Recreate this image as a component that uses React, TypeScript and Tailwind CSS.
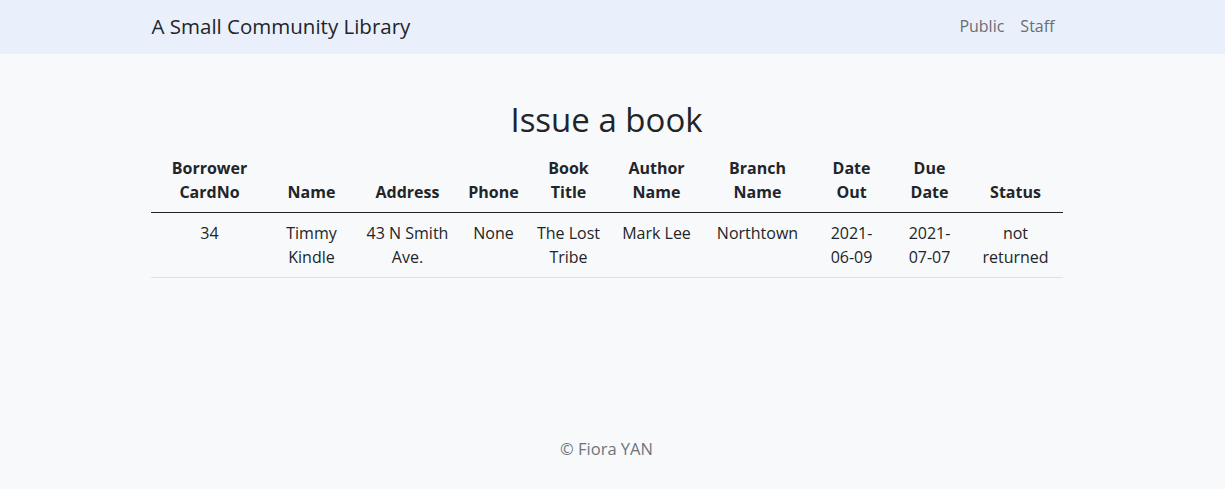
import React from 'react';

const columns = [
  { w: 'w-[118px]', head: ['Borrower', 'CardNo'], cell: ['34'] },
  { w: 'w-[86px]', head: ['Name'], cell: ['Timmy', 'Kindle'] },
  { w: 'w-[106px]', head: ['Address'], cell: ['43 N Smith', 'Ave.'] },
  { w: 'w-[66px]', head: ['Phone'], cell: ['None'] },
  { w: 'w-[84px]', head: ['Book', 'Title'], cell: ['The Lost', 'Tribe'] },
  { w: 'w-[92px]', head: ['Author', 'Name'], cell: ['Mark Lee'] },
  { w: 'w-[110px]', head: ['Branch', 'Name'], cell: ['Northtown'] },
  { w: 'w-[78px]', head: ['Date', 'Out'], cell: ['2021-', '06-09'] },
  { w: 'w-[78px]', head: ['Due', 'Date'], cell: ['2021-', '07-07'] },
  { w: 'w-[94px]', head: ['Status'], cell: ['not', 'returned'] },
];

const Lines = ({ lines }: { lines: string[] }) => (
  <>
    {lines.map((l, i) => (
      <span key={i} className="block whitespace-nowrap">{l}</span>
    ))}
  </>
);

export default function App() {
  return (
    <div className="min-h-[489px] bg-[#f8f9fa] text-[#212529] font-['Open_Sans',sans-serif] flex flex-col">
      {/* Navbar */}
      <nav className="bg-[#e9f0fb] pr-3">
        <div className="w-[912px] mx-auto h-[54px] flex items-center justify-between pb-[2px]">
          <span className="text-[20.5px] pl-[1px]">A Small Community Library</span>
          <div className="flex text-[16px] text-[#6a6d71]">
            <a className="px-2">Public</a>
            <a className="px-2">Staff</a>
          </div>
        </div>
      </nav>

      <main className="pr-3 flex-1">
        <div className="w-[912px] mx-auto">
          <h1 className="text-[33px] leading-[1.2] text-center mt-[46px] mb-2">Issue a book</h1>
          <table className="w-full table-fixed border-collapse text-[16px] leading-6">
            <thead>
              <tr className="border-b border-[#212529]">
                {columns.map((c, i) => (
                  <th key={i} className={`${c.w} px-1 py-2 font-bold text-center align-bottom`}>
                    <Lines lines={c.head} />
                  </th>
                ))}
              </tr>
            </thead>
            <tbody>
              <tr className="border-b border-[#dee2e6]">
                {columns.map((c, i) => (
                  <td key={i} className="px-1 py-2 text-center align-top">
                    <Lines lines={c.cell} />
                  </td>
                ))}
              </tr>
            </tbody>
          </table>
        </div>
      </main>

      <footer className="pr-3 pb-[27px] text-center text-[16.5px] text-[#6c757d]">
        © Fiora YAN
      </footer>
    </div>
  );
}
